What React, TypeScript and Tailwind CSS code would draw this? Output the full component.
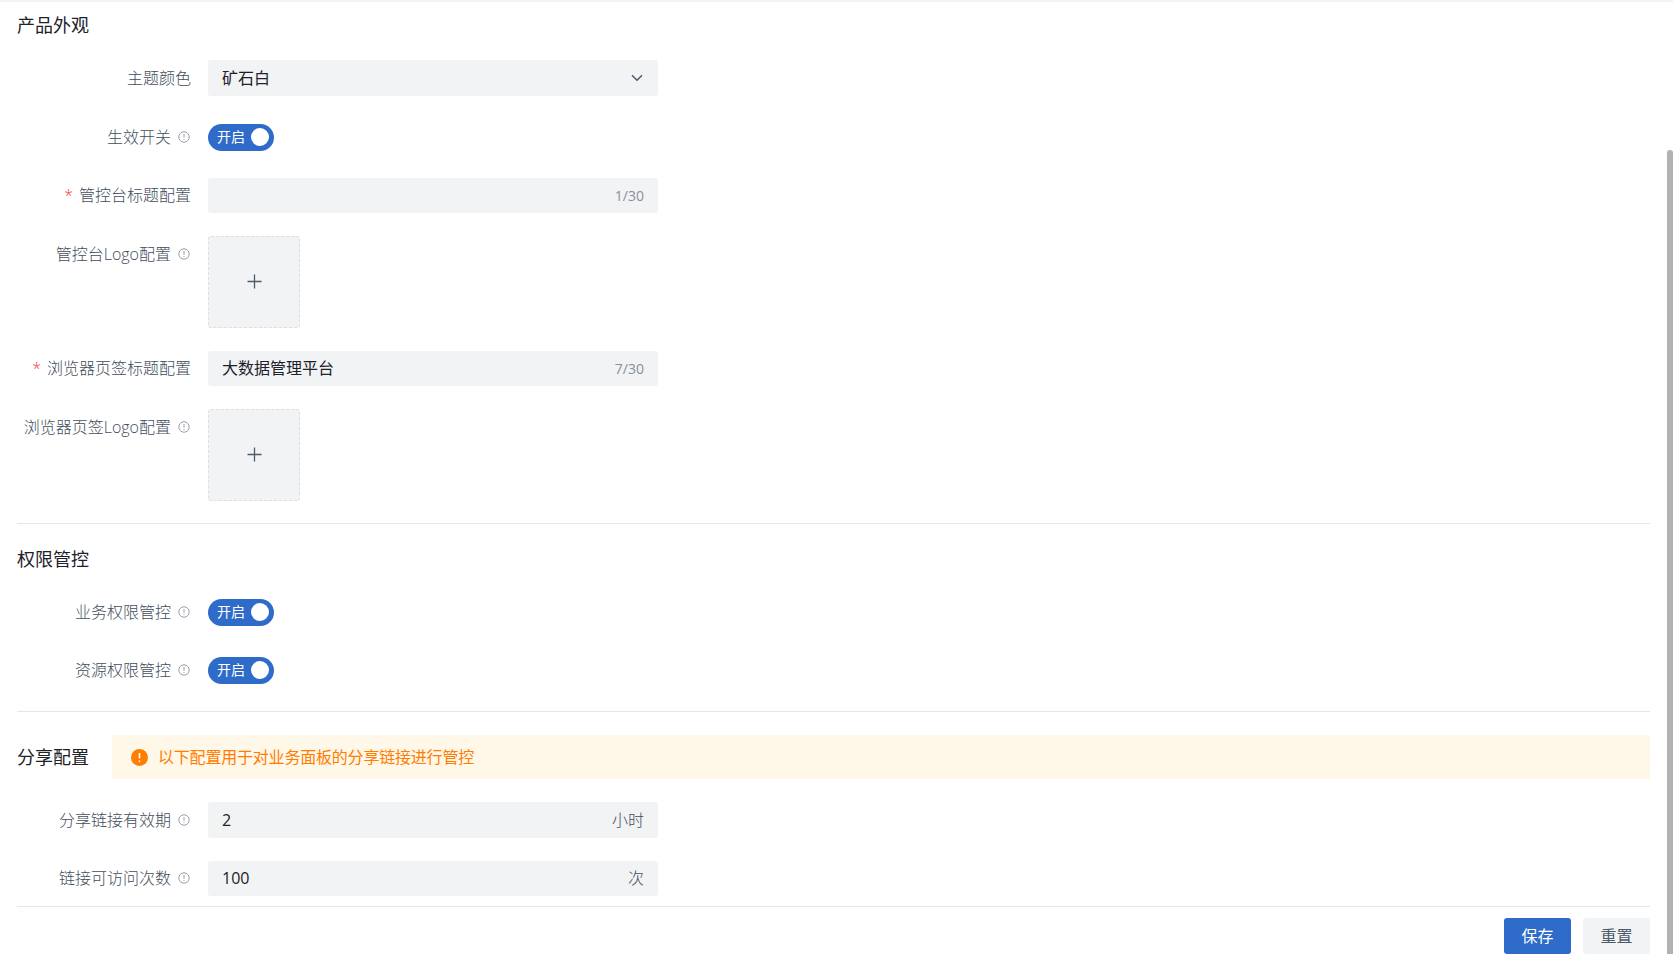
const FONT = { fontFamily: '"Open Sans", "Noto Sans CJK SC", sans-serif' };

function Tip() {
  return (
    <svg width="12" height="12" viewBox="0 0 12 12" fill="none" className="ml-[7px] mr-[1px] shrink-0">
      <circle cx="6" cy="6" r="5.2" stroke="#98a0ac" strokeWidth="1" />
      <path d="M6 3v3.8M6 8.2v.9" stroke="#98a0ac" strokeWidth="1" />
    </svg>
  );
}

function Row({
  label,
  tip,
  required,
  top,
  className,
  children,
}: {
  label: string;
  tip?: boolean;
  required?: boolean;
  top?: boolean;
  className: string;
  children: React.ReactNode;
}) {
  return (
    <div className={`flex ${top ? "items-start" : "items-center"} ${className}`}>
      <div className={`flex w-[174px] shrink-0 items-center justify-end pb-[1px] text-[16px] font-light leading-none text-[#434d5b] ${top ? "h-[36px]" : ""}`}>
        {required && <span className="mr-[6px] text-[#f53f3f]">*</span>}
        <span className="whitespace-nowrap">{label}</span>
        {tip && <Tip />}
      </div>
      <div className="ml-[17px] min-w-0 flex-1">{children}</div>
    </div>
  );
}

function Field({ value, suffix, h, muted }: { value?: string; suffix: string; h: string; muted?: boolean }) {
  return (
    <div className={`flex w-[450px] items-center justify-between rounded-[3px] bg-[#f2f3f5] pb-[1px] pl-[14px] pr-[14px] text-[16px] text-[#1d2129] ${h}`}>
      <span>{value}</span>
      <span className={muted ? "text-[14px] text-[#86909c]" : "font-light text-[#434d5b]"}>{suffix}</span>
    </div>
  );
}

function Toggle() {
  return (
    <div className="flex h-[27px] w-[66px] items-center justify-between rounded-full bg-[#2f6bc8] pb-[1px] pl-[9px] pr-[5px] text-[14px] leading-none text-white">
      <span>开启</span>
      <span className="h-[18px] w-[18px] rounded-full bg-white" />
    </div>
  );
}

function Upload() {
  return (
    <div className="flex h-[92px] w-[92px] items-center justify-center rounded-[3px] border border-dashed border-[#dcdfe5] bg-[#f2f3f5]">
      <svg width="15" height="15" viewBox="0 0 15 15" fill="none" className="-translate-y-[1px]">
        <path d="M7.5 0.5v14M0.5 7.5h14" stroke="#4e5969" strokeWidth="1.3" />
      </svg>
    </div>
  );
}

function Title({ text }: { text: string }) {
  return <div className="text-[18px] leading-[24px] text-[#1d2129]">{text}</div>;
}

export default function App() {
  return (
    <div style={FONT} className="relative h-[966px] overflow-hidden border-t-2 border-[#f2f3f5] bg-white pl-[17px] pr-[23px] pt-[11px]">
      <Title text="产品外观" />
      <Row label="主题颜色" className="mt-[23px]">
        <div className="flex h-[36px] w-[450px] items-center justify-between rounded-[3px] bg-[#f2f3f5] pl-[14px] pr-[15px] text-[16px] text-[#1d2129]">
          <span>矿石白</span>
          <svg width="12" height="8" viewBox="0 0 12 8" fill="none">
            <path d="M1 1.2l5 5 5-5" stroke="#4e5969" strokeWidth="1.5" />
          </svg>
        </div>
      </Row>
      <Row label="生效开关" tip className="mt-[28px]">
        <Toggle />
      </Row>
      <Row label="管控台标题配置" required className="mt-[27px]">
        <Field suffix="1/30" h="h-[35px]" muted />
      </Row>
      <Row label="管控台Logo配置" tip top className="mt-[23px]">
        <Upload />
      </Row>
      <Row label="浏览器页签标题配置" required className="mt-[23px]">
        <Field value="大数据管理平台" suffix="7/30" h="h-[35px]" muted />
      </Row>
      <Row label="浏览器页签Logo配置" tip top className="mt-[23px]">
        <Upload />
      </Row>
      <div className="mt-[22px] h-px bg-[#e5e6eb]" />

      <div className="mt-[23px]">
        <Title text="权限管控" />
      </div>
      <Row label="业务权限管控" tip className="mt-[28px]">
        <Toggle />
      </Row>
      <Row label="资源权限管控" tip className="mt-[31px]">
        <Toggle />
      </Row>
      <div className="mt-[27px] h-px bg-[#e5e6eb]" />

      <div className="mt-[23px] flex items-center">
        <Title text="分享配置" />
        <div className="ml-[23px] flex h-[44px] flex-1 items-center rounded-[3px] bg-[#fff7e8] pl-[19px] text-[16px] text-[#ff7d00]">
          <svg width="17" height="17" viewBox="0 0 17 17" fill="none" className="mr-[10px]">
            <circle cx="8.5" cy="8.5" r="8.5" fill="#ff7d00" />
            <path d="M8.5 4v5.5M8.5 11.4v1.5" stroke="#fff" strokeWidth="1.6" />
          </svg>
          <span className="tracking-[-0.2px]">以下配置用于对业务面板的分享链接进行管控</span>
        </div>
      </div>
      <Row label="分享链接有效期" tip className="mt-[23px]">
        <Field value="2" suffix="小时" h="h-[36px]" />
      </Row>
      <Row label="链接可访问次数" tip className="mt-[23px]">
        <Field value="100" suffix="次" h="h-[35px]" />
      </Row>
      <div className="mt-[10px] h-px bg-[#e5e6eb]" />

      <div className="mt-[11px] flex justify-end gap-[12px] text-[16px]">
        <button className="h-[36px] w-[67px] rounded-[3px] bg-[#2f6bc8] text-white">保存</button>
        <button className="h-[36px] w-[67px] rounded-[3px] bg-[#f2f3f5] text-[#4e5969]">重置</button>
      </div>

      <div className="absolute right-0 top-[148px] h-[804px] w-[6px] rounded-t-[3px] bg-[#b2b2b2]" />
    </div>
  );
}
